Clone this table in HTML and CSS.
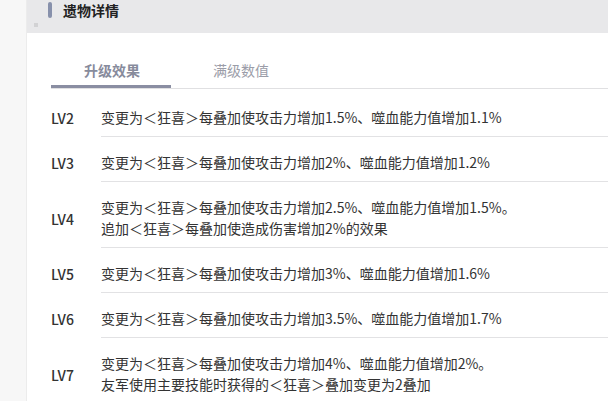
FILE: index.html
```html
<!DOCTYPE html>
<html lang="zh">
<head>
<meta charset="utf-8">
<link rel="stylesheet" href="styles.css">
</head>
<body>
<div class="page">
  <aside class="side"></aside>
  <main class="main">
    <header class="head">
      <div class="head-row"><span class="bar"></span><h2 class="title">遗物详情</h2></div>
      <i class="dot"></i>
    </header>
    <section class="panel">
      <nav class="tabs">
        <span class="tab active">升级效果</span>
        <span class="tab">满级数值</span>
      </nav>
      <ul class="rows">
        <li class="row"><span class="lv">LV2</span><div class="desc">变更为＜狂喜＞每叠加使攻击力增加1.5%、噬血能力值增加1.1%</div></li>
        <li class="row"><span class="lv">LV3</span><div class="desc">变更为＜狂喜＞每叠加使攻击力增加2%、噬血能力值增加1.2%</div></li>
        <li class="row"><span class="lv">LV4</span><div class="desc">变更为＜狂喜＞每叠加使攻击力增加2.5%、噬血能力值增加1.5%。<br>追加＜狂喜＞每叠加使造成伤害增加2%的效果</div></li>
        <li class="row"><span class="lv">LV5</span><div class="desc">变更为＜狂喜＞每叠加使攻击力增加3%、噬血能力值增加1.6%</div></li>
        <li class="row"><span class="lv">LV6</span><div class="desc">变更为＜狂喜＞每叠加使攻击力增加3.5%、噬血能力值增加1.7%</div></li>
        <li class="row"><span class="lv">LV7</span><div class="desc">变更为＜狂喜＞每叠加使攻击力增加4%、噬血能力值增加2%。<br>友军使用主要技能时获得的＜狂喜＞叠加变更为2叠加</div></li>
      </ul>
    </section>
  </main>
</div>
</body>
</html>
```

FILE: styles.css
```css
* { box-sizing: border-box; }
html, body { margin: 0; padding: 0; background: #fff; }
body {
  font-family: "Noto Sans CJK SC", "Noto Sans", sans-serif;
  color: #333;
  overflow: hidden;
}
.page {
  display: flex;
  height: 401px;
}
.side {
  width: 27px;
  flex: none;
  background: #f7f7f7;
  border-right: 1px solid #ececec;
}
.main {
  flex: 1;
  min-width: 0;
  display: flex;
  flex-direction: column;
}
.head {
  flex: none;
  background: #e8e8ea;
  height: 33px;
  display: flex;
  flex-direction: column;
}
.head-row {
  display: flex;
  align-items: center;
  height: 20px;
  padding-left: 21px;
}
.bar {
  width: 4px;
  height: 16px;
  border-radius: 2px;
  background: #8790ab;
  margin-right: 11px;
}
.title {
  margin: 0;
  font-size: 14px;
  font-weight: 700;
  color: #222;
  line-height: 20px;
}
.dot {
  display: block;
  width: 4px;
  height: 4px;
  background: #d2d2d4;
  margin: 3px 0 0 7px;
}
.panel {
  flex: none;
  padding: 22px 0 0 24px;
}
.tabs {
  display: flex;
  border-bottom: 1px solid #e0e0e2;
  height: 34px;
}
.tab {
  width: 120px;
  text-align: center;
  font-size: 14px;
  line-height: 30px;
  color: #9b9da8;
  padding-left: 2px;
}
.tab + .tab { margin-left: 10px; width: 100px; text-align: left; padding-left: 32px; }
.tab.active {
  color: #878b9c;
  font-weight: 700;
  border-bottom: 3px solid #8a8ea2;
  height: 33px;
}
.rows {
  list-style: none;
  margin: 0;
  padding: 3px 0 0;
}
.row {
  display: flex;
  align-items: stretch;
}
.lv {
  width: 50px;
  flex: none;
  font-size: 14px;
  font-weight: 500;
  color: #333;
  display: flex;
  align-items: center;
  padding-top: 7px;
}
.desc {
  flex: 1;
  font-size: 14px;
  line-height: 21px;
  color: #333;
  padding: 15px 0 8px;
  border-bottom: 1px solid #e2e2e4;
  white-space: nowrap;
}
```
